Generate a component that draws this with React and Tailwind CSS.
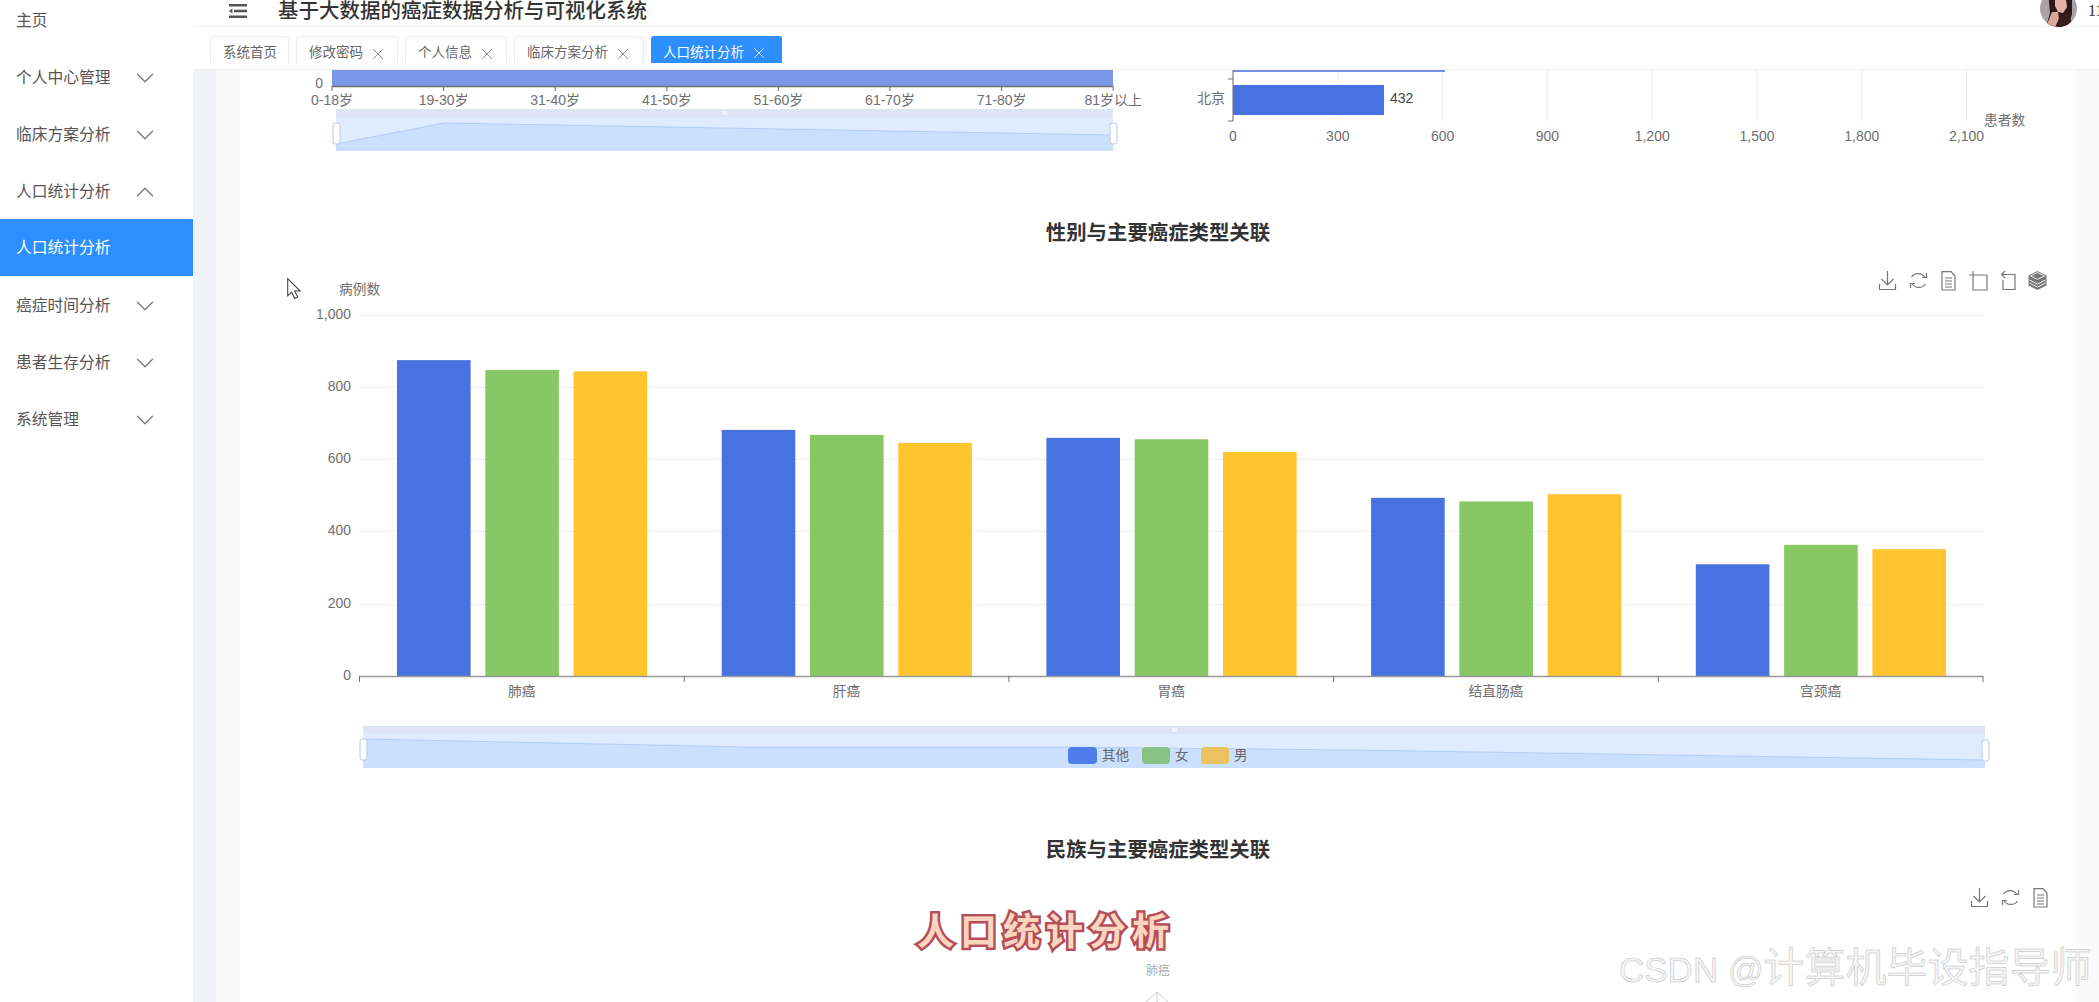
import { ChevronDown, ChevronUp, X } from "lucide-react"

const menu = [
    { label: "主页" },
    { label: "个人中心管理", arrow: "down" },
    { label: "临床方案分析", arrow: "down" },
    { label: "人口统计分析", arrow: "up" },
    { label: "人口统计分析", active: true },
    { label: "癌症时间分析", arrow: "down" },
    { label: "患者生存分析", arrow: "down" },
    { label: "系统管理", arrow: "down" },
]

const tabs = [
    { label: "系统首页", width: "w-[79px]" },
    { label: "修改密码", width: "w-[102px]", close: true },
    { label: "个人信息", width: "w-[102px]", close: true },
    { label: "临床方案分析", width: "w-[130px]", close: true },
    { label: "人口统计分析", width: "w-[131px]", close: true, active: true },
]

const ageLabels = ["0-18岁", "19-30岁", "31-40岁", "41-50岁", "51-60岁", "61-70岁", "71-80岁", "81岁以上"]
const cityTicks = ["0", "300", "600", "900", "1,200", "1,500", "1,800", "2,100"]

const cancerData = [
    { name: "肺癌", values: [874, 847, 843] },
    { name: "肝癌", values: [681, 667, 645] },
    { name: "胃癌", values: [659, 655, 620] },
    { name: "结直肠癌", values: [493, 483, 503] },
    { name: "宫颈癌", values: [309, 363, 351] },
]
const barColors = ["#4871e2", "#87c764", "#ffc42e"]
const axisText = "#6f6f6f"
const yTicks = [
    { label: "1,000", y: 315 },
    { label: "800", y: 387 },
    { label: "600", y: 459 },
    { label: "400", y: 531 },
    { label: "200", y: 604 },
    { label: "0", y: 676 },
]

function Sidebar() {
    return (
        <aside className="w-[193px] shrink-0 bg-white -mt-[9px]">
            {menu.map((item, i) => (
                <div
                    key={i}
                    className={
                        item.active
                            ? "flex h-[57px] items-center pl-4 text-[15.75px] bg-[#2d8eff] text-white"
                            : "flex h-[57px] items-center justify-between pl-4 pr-[33px] pt-[2px] text-[15.75px] text-[#555]"
                    }
                >
                    <span>{item.label}</span>
                    {item.arrow === "down" && <ChevronDown size={30} strokeWidth={1} color="#777" />}
                    {item.arrow === "up" && <ChevronUp size={30} strokeWidth={1} color="#777" />}
                </div>
            ))}
        </aside>
    )
}

function Avatar() {
    return (
        <svg width="37" height="37" viewBox="0 0 37 37" className="-mt-[4px] shrink-0">
            <defs>
                <clipPath id="avatar-clip">
                    <circle cx="18.5" cy="18.5" r="18.5" />
                </clipPath>
            </defs>
            <g clipPath="url(#avatar-clip)">
                <rect width="37" height="37" fill="#a9a2a6" />
                <path d="M8 0h24v24l-4 13H6l4-14z" fill="#2c1a1c" />
                <path d="M15 10h11l1 7-4 6-5-1-3-6z" fill="#e6b3a4" />
                <path d="M12 22l6 0 1 7-4 8H6z" fill="#d9a796" />
                <path d="M19 27l9-3 6 13H17z" fill="#3a1d1d" />
            </g>
        </svg>
    )
}

function Header() {
    return (
        <header className="flex h-[27px] shrink-0 items-center border-b border-[#f1f1f1] pb-[5px] pl-9">
            <svg width="18" height="14" viewBox="0 0 18 14" className="shrink-0">
                <path d="M0 0h18v2.400H0zM0 11.600h18V14H0zM5 5.800h13v2.400H5zM0 7l3.400-2.600v5.200z" fill="#555" />
            </svg>
            <h1 className="ml-[31px] text-[20.5px] leading-[20px] font-medium text-[#333]">基于大数据的癌症数据分析与可视化系统</h1>
            <div className="ml-auto flex items-center gap-[11px]">
                <Avatar />
                <span className="w-[11px] overflow-hidden font-['Liberation_Serif',serif] text-[16px] leading-[20px] text-[#333]">11</span>
            </div>
        </header>
    )
}

function TabBar() {
    return (
        <nav className="flex h-[43px] shrink-0 gap-[7px] border-b border-[#efefef] pl-[17px] pt-[9px]">
            {tabs.map((tab) => (
                <div
                    key={tab.label}
                    className={
                        "flex h-[27px] items-center gap-[6px] rounded-t-[3px] pl-3 pt-[7px] text-[13.5px] " +
                        tab.width +
                        (tab.active
                            ? " bg-[#2d8eff] text-white"
                            : " border border-b-0 border-[#ececec] text-[#666]")
                    }
                >
                    <span>{tab.label}</span>
                    {tab.close && <X size={18} strokeWidth={1.1} color={tab.active ? "#fff" : "#777"} />}
                </div>
            ))}
        </nav>
    )
}

// dataZoom slider of an echarts chart
function Slider({ x1, x2, top, area, grip, leftHandle, rightHandle }) {
    const bottom = top + 42
    const points = area.map((p) => p.join(",")).join(" ")
    return (
        <g>
            <rect x={x1} y={top} width={x2 - x1} height={42} fill="#dfecff" />
            <polygon points={`${points} ${x2},${bottom} ${x1},${bottom}`} fill="#cbdffe" />
            <polyline points={points} fill="none" stroke="#b3cdf8" strokeWidth="1" />
            <rect x={x1} y={top} width={x2 - x1} height={8} fill="#dce4f5" />
            <rect x={grip} y={top + 2} width={5} height={4} fill="#eef3fb" />
            <rect x={x1 - 3} y={leftHandle} width={7} height={21} rx={2.5} fill="#fff" stroke="#b4c7e8" />
            <rect x={x2 - 3} y={rightHandle} width={7} height={21} rx={2.5} fill="#fff" stroke="#b4c7e8" />
        </g>
    )
}

function AgeChart() {
    return (
        <svg width="940" height="90" viewBox="240 70 940 90" className="shrink-0">
            <rect x="332" y="70" width="781" height="16" fill="#7b97e8" />
            <path d="M332 86.5H1113" stroke={axisText} strokeWidth="1.5" />
            {ageLabels.map((label, i) => {
                const x = 332 + i * 111.6
                return (
                    <g key={label}>
                        <path d={`M${x} 86v5`} stroke={axisText} />
                        <text x={x} y="100" textAnchor="middle" dominantBaseline="central" fontSize="14" fill={axisText}>
                            {label}
                        </text>
                    </g>
                )
            })}
            <text x="323" y="83" textAnchor="end" dominantBaseline="central" fontSize="14" fill={axisText}>0</text>
            <Slider
                x1={336}
                x2={1113}
                top={109}
                grip={722}
                leftHandle={123}
                rightHandle={123}
                area={[[336, 144], [444, 123], [667, 127], [1113, 135]]}
            />
        </svg>
    )
}

function CityChart() {
    return (
        <svg width="896" height="90" viewBox="1180 70 896 90" className="shrink-0">
            {cityTicks.map((label, i) => {
                const x = 1233 + i * 104.8
                return (
                    <g key={label}>
                        <path d={`M${x} 70V121`} stroke="#ececec" />
                        <text x={x} y="136" textAnchor="middle" dominantBaseline="central" fontSize="14" fill={axisText}>
                            {label}
                        </text>
                    </g>
                )
            })}
            <rect x="1233" y="70" width="212" height="2" fill="#6f8fe0" />
            <rect x="1233" y="85" width="151" height="30" fill="#4871e2" />
            <path d="M1233 70V121M1228 79h5M1228 121h5" stroke={axisText} fill="none" />
            <text x="1390" y="98" dominantBaseline="central" fontSize="14" fill="#444">432</text>
            <text x="1225" y="98" textAnchor="end" dominantBaseline="central" fontSize="14" fill={axisText}>北京</text>
            <text x="1984" y="120" dominantBaseline="central" fontSize="13.7" fill={axisText}>患者数</text>
        </svg>
    )
}

function ToolIcon({ name, x, y }) {
    const common = { fill: "none", stroke: "#777", strokeWidth: 1.2 }
    return (
        <g transform={`translate(${x} ${y})`}>
            {name === "download" && <path {...common} d="M8.500 0v14M2.500 8l6 6 6-6M.5 13v5.500h16V13" />}
            {name === "refresh" && (
                <path {...common} d="M2.500 6A8 8 0 0 1 16 6.500M17.500 2v4.500H13M16.500 13A8 8 0 0 1 3 12.500M1.500 17v-4.500H6" />
            )}
            {name === "doc" && <path {...common} d="M1 .6h9l4 4.400v14H1zM4 7h7M4 10h7M4 13h7M4 16h7" />}
            {name === "zoom" && <path {...common} d="M4 0v19h14V4H0" />}
            {name === "back" && <path {...common} d="M5 0L1.500 3.500 5 7M1.500 3.500H15v15H3V9" />}
            {name === "stack" && (
                <g>
                    <path d="M9.500 0l9 4.500v10l-9 4.500-9-4.500v-10z" fill="#777" />
                    <path d="M9.500 1.500l7 3.400-7 3.400-7-3.400zM1.500 9l8 4 8-4M1.500 12l8 4 8-4" fill="none" stroke="#eee" strokeWidth="1" />
                </g>
            )}
        </g>
    )
}

function GenderChart() {
    return (
        <svg width="1836" height="530" viewBox="240 260 1836 530" className="mt-[15px] block shrink-0">
            {yTicks.map((t) => (
                <g key={t.label}>
                    {t.y !== 676 && <path d={`M359 ${t.y}.5H1983`} stroke="#ececec" />}
                    <text x="351" y={t.y - 1} textAnchor="end" dominantBaseline="central" fontSize="14" fill={axisText}>
                        {t.label}
                    </text>
                </g>
            ))}
            <text x="339" y="289" dominantBaseline="central" fontSize="13.7" fill={axisText}>病例数</text>
            {cancerData.map((group, i) => {
                const start = 359.5 + i * 324.7
                return (
                    <g key={group.name}>
                        {group.values.map((v, j) => (
                            <rect
                                key={j}
                                x={start + 37.5 + j * 88.3}
                                y={676 - v * 0.3614}
                                width="73.6"
                                height={v * 0.3614}
                                fill={barColors[j]}
                            />
                        ))}
                        <text
                            x={start + 162.3}
                            y="691"
                            textAnchor="middle"
                            dominantBaseline="central"
                            fontSize="13.7"
                            fill={axisText}
                        >
                            {group.name}
                        </text>
                    </g>
                )
            })}
            <path d="M359 676.5H1983" stroke="#999" strokeWidth="1.5" />
            {[0, 1, 2, 3, 4, 5].map((i) => (
                <path key={i} d={`M${359.5 + i * 324.7} 676v6`} stroke={axisText} />
            ))}
            <ToolIcon name="download" x={1879} y={271} />
            <ToolIcon name="refresh" x={1909} y={271} />
            <ToolIcon name="doc" x={1941} y={271} />
            <ToolIcon name="zoom" x={1969} y={271} />
            <ToolIcon name="back" x={2000} y={271} />
            <ToolIcon name="stack" x={2028} y={271} />
            <Slider
                x1={363}
                x2={1985}
                top={726}
                grip={1172}
                leftHandle={739}
                rightHandle={740}
                area={[[363, 739], [745, 747], [1060, 747], [1350, 750], [1985, 760]]}
            />
            <rect x="1068" y="747" width="29" height="17" rx="4" fill="#4f7ee8" />
            <text x="1102" y="755" dominantBaseline="central" fontSize="13.5" fill="#666">其他</text>
            <rect x="1142" y="747" width="28" height="17" rx="4" fill="#88c284" />
            <text x="1175" y="755" dominantBaseline="central" fontSize="13.5" fill="#666">女</text>
            <rect x="1201" y="747" width="28" height="17" rx="4" fill="#ecc160" />
            <text x="1234" y="755" dominantBaseline="central" fontSize="13.5" fill="#666">男</text>
        </svg>
    )
}

function NationChart() {
    return (
        <svg width="1836" height="120" viewBox="240 882 1836 120" className="mt-5 block shrink-0">
            <ToolIcon name="download" x={1971} y={888} />
            <ToolIcon name="refresh" x={2001} y={888} />
            <ToolIcon name="doc" x={2033} y={888} />
            <text x="1158" y="971" textAnchor="middle" dominantBaseline="central" fontSize="12" fill="#aaa">肺癌</text>
            <path d="M1157 992V1002M1157 992L1146 1002M1157 992L1168 1002" stroke="#ccc" fill="none" />
        </svg>
    )
}

export default function App() {
    return (
        <div className="relative flex h-screen w-full overflow-hidden bg-white [font-family:'Liberation_Sans','Noto_Sans_CJK_SC',sans-serif]">
            <Sidebar />

            <div className="flex min-w-0 flex-1 flex-col">
                <Header />
                <TabBar />

                {/* Content */}
                <main className="min-h-0 flex-1 overflow-hidden bg-[#f0f2f7] pl-[23px]">
                    <div className="h-full bg-[#fafafa] pl-6 pr-[23px]">
                        <div className="h-full overflow-hidden bg-white">
                            <div className="flex">
                                <AgeChart />
                                <CityChart />
                            </div>

                            <h2 className="mt-[61px] text-center text-[20.4px] leading-6 font-bold text-[#333]">
                                性别与主要癌症类型关联
                            </h2>
                            <GenderChart />

                            <h2 className="mt-[48px] text-center text-[20.4px] leading-6 font-bold text-[#333]">
                                民族与主要癌症类型关联
                            </h2>
                            <NationChart />
                        </div>
                    </div>
                </main>
            </div>

            {/* mouse pointer from the recording */}
            <svg width="16" height="22" viewBox="0 0 16 22" className="absolute left-[287px] top-[278px]">
                <path d="M.7.7v17l4-3.500 3 6.300 3-1.400-3-6.100h5.500z" fill="#fff" stroke="#444" strokeWidth="1.100" />
            </svg>

            {/* video caption */}
            <div className="absolute left-[917px] top-[905px] text-[37px] leading-[48px] font-bold tracking-[6px] text-[#fdd5bf] [-webkit-text-stroke:5px_#b44e58] [paint-order:stroke_fill] [font-family:'Noto_Sans_CJK_SC',sans-serif]">
                人口统计分析
            </div>

            {/* CSDN watermark */}
            <div className="absolute left-[1619px] top-[944px] leading-[48px] whitespace-nowrap text-[#f4f4f4] [-webkit-text-stroke:0.5px_#bdbdbd]">
                <span className="text-[35px]">CSDN @</span>
                <span className="text-[41px]">计算机毕设指导师</span>
            </div>
        </div>
    )
}
